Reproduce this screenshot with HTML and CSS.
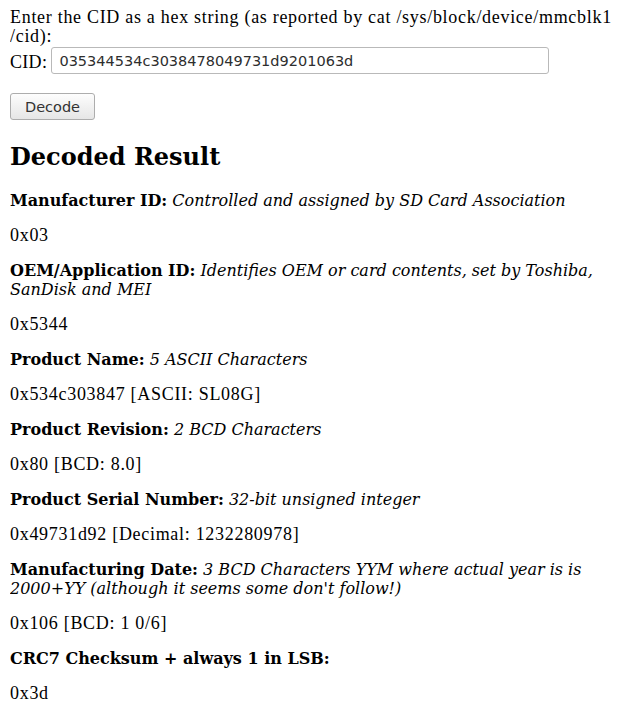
FILE: index.html
```html
<!DOCTYPE html>
<html lang="en">
<head>
    <meta charset="UTF-8">
    <title>SD Card CID Decoder</title>
    <link rel="stylesheet" href="styles.css">
</head>
<body>
    <div class="entry">
        Enter the CID as a hex string (as reported by cat /sys/block/device/mmcblk1<br>/cid):<br>
        <label for="cid" class="cid-label">CID:</label>
        <input type="text" id="cid" class="cid-input" value="035344534c3038478049731d9201063d">
    </div>
    <div class="actions">
        <button class="decode-btn">Decode</button>
    </div>

    <h2>Decoded Result</h2>
    <div id="result">
        <p><strong>Manufacturer ID:</strong> <em>Controlled and assigned by SD Card Association</em></p>
        <p class="value">0x03</p>
        <p><strong>OEM/Application ID:</strong> <em>Identifies OEM or card contents, set by Toshiba, SanDisk and MEI</em></p>
        <p class="value">0x5344</p>
        <p><strong>Product Name:</strong> <em>5 ASCII Characters</em></p>
        <p class="value">0x534c303847 [ASCII: SL08G]</p>
        <p><strong>Product Revision:</strong> <em>2 BCD Characters</em></p>
        <p class="value">0x80 [BCD: 8.0]</p>
        <p><strong>Product Serial Number:</strong> <em>32-bit unsigned integer</em></p>
        <p class="value">0x49731d92 [Decimal: 1232280978]</p>
        <p><strong>Manufacturing Date:</strong> <em>3 BCD Characters YYM where actual year is is 2000+YY (although it seems some don't follow!)</em></p>
        <p class="value">0x106 [BCD: 1 0/6]</p>
        <p><strong>CRC7 Checksum + always 1 in LSB:</strong></p>
        <p class="value">0x3d</p>
    </div>
</body>
</html>
```

FILE: styles.css
```css
body {
    font-family: 'DejaVu Serif', serif;
    font-size: 16px;
    line-height: 19px;
    margin: 10px;
    color: #000;
    background: #fff;
}
.entry, .value {
    font-family: 'Liberation Serif', serif;
    font-size: 18px;
    letter-spacing: 0.7px;
}
.entry {
    margin-top: -2px;
}
.cid-label {
    letter-spacing: 0.3px;
}
.cid-input {
    font-family: 'DejaVu Sans', sans-serif;
    font-size: 14.5px;
    letter-spacing: 0;
    width: 498px;
    height: 27px;
    box-sizing: border-box;
    padding: 2px 7px;
    border: 1px solid #b9b9b9;
    border-radius: 3px;
    margin: 1px 0 0 -1px;
    vertical-align: 2px;
    color: #2e2e2e;
}
.actions {
    margin-top: 19px;
}
.decode-btn {
    font-family: 'DejaVu Sans', sans-serif;
    font-size: 14.5px;
    width: 85px;
    height: 27px;
    border: 1px solid #adadad;
    border-radius: 3px;
    background: linear-gradient(#fdfdfd, #e6e6e6);
    color: #333;
    margin: 0;
}
h2 {
    font-size: 24px;
    line-height: 28px;
    margin: 23px 0 20px;
}
p {
    margin: 16px 0;
}
```
